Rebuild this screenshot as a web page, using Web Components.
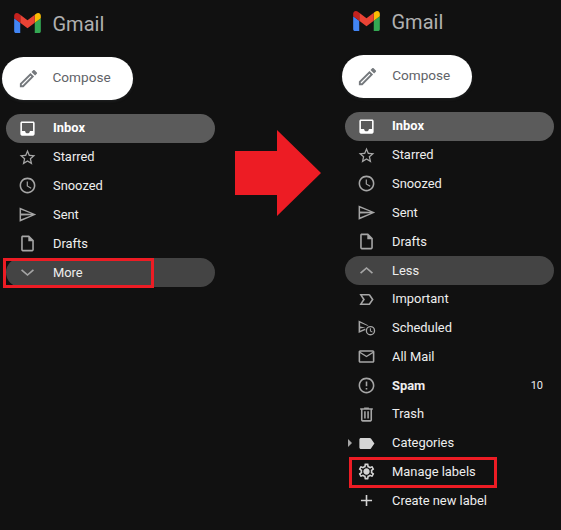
<!DOCTYPE html>
<html lang="en">
<head>
<meta charset="utf-8">
<title>Gmail sidebar</title>
<style>
  html, body { margin: 0; background: #111111; }
  body { font-family: Roboto, "Liberation Sans", sans-serif; }
</style>
</head>
<body>
<gm-page>
  <gm-sidebar style="--top: 13px; --compose-x: 2px; --compose-w: 131px">
    <gm-row icon="inbox" active bold>Inbox</gm-row>
    <gm-row icon="star">Starred</gm-row>
    <gm-row icon="clock">Snoozed</gm-row>
    <gm-row icon="send">Sent</gm-row>
    <gm-row icon="draft">Drafts</gm-row>
    <gm-row icon="down" hover>More</gm-row>
  </gm-sidebar>
  <gm-sidebar style="--top: 11px; --compose-x: 2.7px; --compose-w: 130.3px">
    <gm-row icon="inbox" active bold>Inbox</gm-row>
    <gm-row icon="star">Starred</gm-row>
    <gm-row icon="clock">Snoozed</gm-row>
    <gm-row icon="send">Sent</gm-row>
    <gm-row icon="draft">Drafts</gm-row>
    <gm-row icon="up" hover>Less</gm-row>
    <gm-row icon="important">Important</gm-row>
    <gm-row icon="scheduled">Scheduled</gm-row>
    <gm-row icon="mail">All Mail</gm-row>
    <gm-row icon="spam" bold count="10">Spam</gm-row>
    <gm-row icon="trash">Trash</gm-row>
    <gm-row icon="label" caret light>Categories</gm-row>
    <gm-row icon="gear" light>Manage labels</gm-row>
    <gm-row icon="plus" light>Create new label</gm-row>
  </gm-sidebar>
  <gm-arrow></gm-arrow>
  <gm-mark style="left: 3px; top: 258px; width: 145px; height: 24px"></gm-mark>
  <gm-mark style="left: 349px; top: 457px; width: 142px; height: 25px"></gm-mark>
</gm-page>

<script>
// material icon paths, 24x24
const ICONS = {
  inbox: "M19 3H5c-1.1 0-2 .9-2 2v14c0 1.1.9 2 2 2h14c1.1 0 2-.9 2-2V5c0-1.1-.9-2-2-2zm0 12h-4c0 1.66-1.34 3-3 3s-3-1.34-3-3H5V5h14v10z",
  star: "M22 9.24l-7.19-.62L12 2 9.19 8.63 2 9.24l5.46 4.73L5.82 21 12 17.27 18.18 21l-1.63-7.03L22 9.24zM12 15.4l-3.76 2.27 1-4.28-3.32-2.88 4.38-.38L12 6.1l1.71 4.04 4.38.38-3.32 2.88 1 4.28L12 15.4z",
  clock: "M11.99 2C6.47 2 2 6.48 2 12s4.47 10 9.99 10C17.52 22 22 17.52 22 12S17.52 2 11.99 2zM12 20c-4.42 0-8-3.58-8-8s3.58-8 8-8 8 3.58 8 8-3.58 8-8 8zm.5-13H11v6l5.25 3.15.75-1.23-4.5-2.67z",
  send: "M2 3v18l21-9L2 3zM3.9 5.9L17 11.2l-13.1-.6V5.9zM3.9 13.4l13.1-.6-13.1 5.3v-4.7z",
  draft: "M14 2H6c-1.1 0-1.99.9-1.99 2L4 20c0 1.1.89 2 1.99 2H18c1.1 0 2-.9 2-2V8l-6-6zm4 18H6V4h7v5h5v11z",
  down: "M5.2 8L12 13.8 18.8 8l1.4 1.5L12 16.5 3.8 9.5z",
  up: "M5.2 16L12 10.2 18.8 16l1.4-1.5L12 7.5 3.8 14.5z",
  important: "M15 19H3l4.5-7L3 5h12c.65 0 1.26.31 1.63.84L21 12l-4.37 6.16c-.37.52-.98.84-1.63.84zm-8.5-2H15l3.5-5L15 7H6.5l3.5 5-3.5 5z",
  scheduled: "M2 3v16l8.6-3.7-.3-1.9L4 16.2v-3l6.5-1.2L4 10.8V6l9 3.9 1.6-.5L2 3zm15 7a6 6 0 1 0 0 12 6 6 0 0 0 0-12zm0 10.3a4.3 4.3 0 1 1 0-8.6 4.3 4.3 0 0 1 0 8.6zm.6-7.3h-1.3v3.6l2.9 1.7.6-1-2.2-1.3V13z",
  mail: "M22 6c0-1.1-.9-2-2-2H4c-1.1 0-2 .9-2 2v12c0 1.1.9 2 2 2h16c1.1 0 2-.9 2-2V6zm-2 0l-8 5-8-5h16zm0 12H4V8l8 5 8-5v10z",
  spam: "M11 15h2v2h-2zm0-8h2v6h-2zm.99-5C6.47 2 2 6.48 2 12s4.47 10 9.99 10C17.52 22 22 17.52 22 12S17.52 2 11.99 2zM12 20c-4.42 0-8-3.58-8-8s3.58-8 8-8 8 3.58 8 8-3.58 8-8 8z",
  trash: "M15 4V3H9v1H4v2h1v13c0 1.1.9 2 2 2h10c1.1 0 2-.9 2-2V6h1V4h-5zm2 15H7V6h10v13zM9 8h2v9H9zm4 0h2v9h-2z",
  label: "M17.63 5.84C17.27 5.33 16.67 5 16 5L5 5.01C3.9 5.01 3 5.9 3 7v10c0 1.1.9 1.99 2 1.99L16 19c.67 0 1.27-.33 1.63-.84L22 12l-4.37-6.16z",
  gear: "M19.43 12.98c.04-.32.07-.64.07-.98 0-.34-.03-.66-.07-.98l2.11-1.65c.19-.15.24-.42.12-.64l-2-3.46c-.09-.16-.26-.25-.44-.25-.06 0-.12.01-.17.03l-2.49 1c-.52-.4-1.08-.73-1.69-.98l-.38-2.65C14.46 2.18 14.25 2 14 2h-4c-.25 0-.46.18-.49.42l-.38 2.65c-.61.25-1.17.59-1.69.98l-2.49-1c-.06-.02-.12-.03-.18-.03-.17 0-.34.09-.43.25l-2 3.46c-.13.22-.07.49.12.64l2.11 1.65c-.04.32-.07.65-.07.98 0 .33.03.66.07.98l-2.11 1.65c-.19.15-.24.42-.12.64l2 3.46c.09.16.26.25.44.25.06 0 .12-.01.17-.03l2.49-1c.52.4 1.08.73 1.69.98l.38 2.65c.03.24.24.42.49.42h4c.25 0 .46-.18.49-.42l.38-2.65c.61-.25 1.17-.59 1.69-.98l2.49 1c.06.02.12.03.18.03.17 0 .34-.09.43-.25l2-3.46c.12-.22.07-.49-.12-.64l-2.11-1.65zm-1.98-1.71c.04.31.05.52.05.73 0 .21-.02.43-.05.73l-.14 1.13.89.7 1.08.84-.7 1.21-1.27-.51-1.04-.42-.9.68c-.43.32-.84.56-1.25.73l-1.06.43-.16 1.13-.2 1.35h-1.4l-.19-1.35-.16-1.13-1.06-.43c-.43-.18-.83-.41-1.23-.71l-.91-.7-1.06.43-1.27.51-.7-1.21 1.08-.84.89-.7-.14-1.13c-.03-.31-.05-.54-.05-.74s.02-.43.05-.73l.14-1.13-.89-.7-1.08-.84.7-1.21 1.27.51 1.04.42.9-.68c.43-.32.84-.56 1.25-.73l1.06-.43.16-1.13.2-1.35h1.39l.19 1.35.16 1.13 1.06.43c.43.18.83.41 1.23.71l.91.7 1.06-.43 1.27-.51.7 1.21-1.07.85-.89.7.14 1.13zM12 8c-2.21 0-4 1.79-4 4s1.79 4 4 4 4-1.79 4-4-1.79-4-4-4z",
  plus: "M19 13h-6v6h-2v-6H5v-2h6V5h2v6h6v2z",
  pencil: "M14.06 9.02l.92.92L5.92 19H5v-.92l9.06-9.06M17.66 3c-.25 0-.51.1-.7.29l-1.83 1.83 3.75 3.75 1.83-1.83c.39-.39.39-1.02 0-1.41l-2.34-2.34c-.2-.2-.45-.29-.71-.29zm-3.6 3.19L3 17.25V21h3.75L17.81 9.94l-3.75-3.75z"
};

class GmPage extends HTMLElement {
  constructor() {
    super();
    this.attachShadow({ mode: "open" }).innerHTML = `
      <style>
        :host { display: flex; position: relative; width: 561px; height: 530px; overflow: hidden; background: #111111; }
      </style>
      <slot></slot>`;
  }
}

class GmSidebar extends HTMLElement {
  constructor() {
    super();
    this.attachShadow({ mode: "open" }).innerHTML = `
      <style>
        :host { display: flex; flex-direction: column; width: 339px; flex: none; padding-top: var(--top); box-sizing: border-box; }
        .logo { display: flex; align-items: center; gap: 11.5px; height: 20px; margin-left: 14px; }
        .logo svg { width: 27px; height: 20px; display: block; }
        .logo span { font-size: 20px; color: #b0b0b0; margin-top: 1px; }
        .compose {
          display: flex; align-items: center; box-sizing: border-box;
          margin: 24px 0 14px var(--compose-x); width: var(--compose-w); height: 43px;
          padding: 0 0 4px 14.5px; gap: 13px; border-radius: 22px; background: #ffffff;
          box-shadow: 0 1px 3px rgba(60, 64, 67, 0.4);
          color: #5f6368; font-size: 13.6px;
        }
        .compose svg { width: 23px; height: 23px; fill: #75797d; flex: none; margin-top: 4px; }
        .rows { display: flex; flex-direction: column; margin-left: 6px; width: 209px; }
      </style>
      <div class="logo">
        <svg viewBox="52 42 88 66" aria-hidden="true">
          <path fill="#4285f4" d="M58 108h14V74L52 59v43c0 3.32 2.69 6 6 6"/>
          <path fill="#34a853" d="M120 108h14c3.32 0 6-2.69 6-6V59l-20 15"/>
          <path fill="#fbbc04" d="M120 48v26l20-15v-8c0-7.42-8.47-11.65-14.4-7.2"/>
          <path fill="#ea4335" d="M72 74V48l24 18 24-18v26L96 92"/>
          <path fill="#c5221f" d="M52 51v8l20 15V48l-5.6-4.2c-5.94-4.45-14.4-.22-14.4 7.2"/>
        </svg>
        <span>Gmail</span>
      </div>
      <div class="compose">
        <svg viewBox="0 0 24 24" aria-hidden="true"><path d="${ICONS.pencil}"/></svg>
        <span>Compose</span>
      </div>
      <div class="rows"><slot></slot></div>`;
  }
}

class GmRow extends HTMLElement {
  constructor() {
    super();
    const icon = ICONS[this.getAttribute("icon")] || "";
    const count = this.getAttribute("count") || "";
    this.attachShadow({ mode: "open" }).innerHTML = `
      <style>
        :host {
          display: flex; align-items: center; position: relative; box-sizing: border-box;
          height: 28.8px; padding: 0 11px 0 12px; border-radius: 15px;
          color: #eeeeee; font-size: 12.9px;
        }
        :host([active]) { background: #5b5b5b; color: #ffffff; }
        :host([hover]) { background: #444444; }
        :host([bold]) { font-weight: 700; }
        svg { width: 19px; height: 19px; fill: #a6a6a6; fill-rule: evenodd; flex: none; margin-right: 16px; }
        :host([active]) svg { fill: #ffffff; }
        :host([light]) svg { fill: #d4d4d4; }
        .name { flex: 1; margin-bottom: 1px; }
        :host([hover]) .name { margin-bottom: 0; }
        .count { font-size: 11px; font-weight: 400; }
        .caret {
          position: absolute; left: 3px; top: 10px; width: 0; height: 0;
          border-left: 4px solid #a6a6a6; border-top: 4px solid transparent; border-bottom: 4px solid transparent;
        }
      </style>
      ${this.hasAttribute("caret") ? '<span class="caret"></span>' : ""}
      <svg viewBox="0 0 24 24" aria-hidden="true"><path d="${icon}"/></svg>
      <span class="name"><slot></slot></span>
      <span class="count">${count}</span>`;
  }
}

class GmArrow extends HTMLElement {
  constructor() {
    super();
    this.attachShadow({ mode: "open" }).innerHTML = `
      <style>
        :host { position: absolute; left: 235px; top: 130px; width: 86px; height: 86px; }
        svg { display: block; width: 100%; height: 100%; }
      </style>
      <svg viewBox="0 0 86 86" aria-hidden="true"><path fill="#ed1c24" d="M0 21h42V0l44 43-44 43V65H0z"/></svg>`;
  }
}

// red box drawn over the screenshot
class GmMark extends HTMLElement {
  constructor() {
    super();
    this.attachShadow({ mode: "open" }).innerHTML = `
      <style>
        :host { position: absolute; border: 3px solid #ed1c24; }
      </style>`;
  }
}

customElements.define("gm-page", GmPage);
customElements.define("gm-sidebar", GmSidebar);
customElements.define("gm-row", GmRow);
customElements.define("gm-arrow", GmArrow);
customElements.define("gm-mark", GmMark);
</script>
</body>
</html>
